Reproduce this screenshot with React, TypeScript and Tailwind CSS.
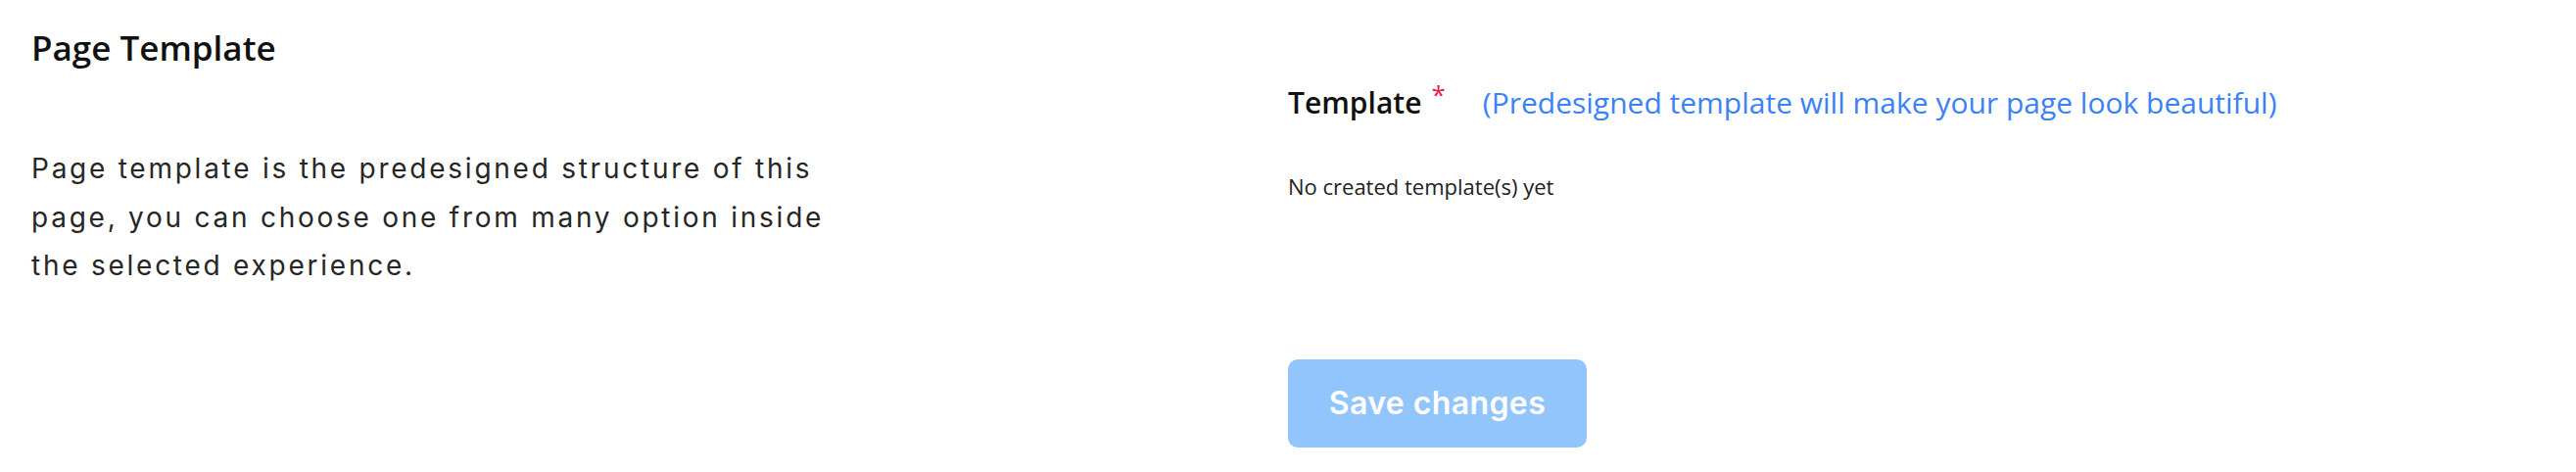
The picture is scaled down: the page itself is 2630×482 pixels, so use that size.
import React from 'react';

const App: React.FC = () => {
    return (
        <div className="w-[2630px] h-[482px] bg-white grid grid-cols-2">
            {/* Left: section description */}
            <div className="pl-[32px] pt-[25px]">
                <h2 className="text-[35px] leading-[48px] font-semibold text-[#111111] font-['Open_Sans',sans-serif]">
                    Page Template
                </h2>
                <p className="mt-[75px] max-w-[860px] text-[28px] leading-[49.5px] tracking-[2.75px] text-[#262626] font-['Inter',sans-serif]">
                    Page template is the predesigned structure of this page, you can choose one from many option inside the selected experience.
                </p>
            </div>

            {/* Right: template field */}
            <div className="pt-[84px] flex flex-col items-start font-['Open_Sans',sans-serif]">
                <div className="flex items-baseline text-[30px] leading-[41px]">
                    <span className="font-semibold text-[#111111]">Template</span>
                    <span className="relative -top-[10px] ml-[10px] text-[26px] text-[#e8194a]">*</span>
                    <span className="ml-[38px] text-[#3b82f6]">(Predesigned template will make your page look beautiful)</span>
                </div>
                <p className="mt-[48px] text-[22px] leading-[30px] text-[#222222]">No created template(s) yet</p>
                <button
                    type="button"
                    disabled
                    className="mt-[162px] w-[305px] h-[90px] rounded-[10px] bg-[#93c5fd] text-white text-[32px] tracking-[0.4px] font-semibold font-['Inter',sans-serif]"
                >
                    Save changes
                </button>
            </div>
        </div>
    );
};

export default App;
